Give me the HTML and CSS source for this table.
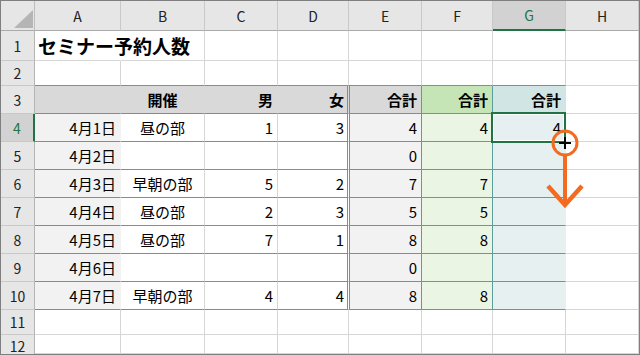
FILE: index.html
```html
<!DOCTYPE html>
<html lang="ja">
<head>
<meta charset="utf-8">
<link rel="stylesheet" href="styles.css">
</head>
<body>
<div class="sheet">
  <div class="corner"><svg width="19" height="18" viewBox="0 0 19 18"><polygon points="19,0 19,18 0,18" fill="#b5b5b5"/></svg></div>
  <div class="ch">A</div><div class="ch">B</div><div class="ch">C</div><div class="ch">D</div><div class="ch">E</div><div class="ch">F</div><div class="ch sel">G</div><div class="ch">H</div>

  <div class="rh">1</div>
  <div class="c title nr">セミナー予約人数</div><div class="c"></div><div class="c"></div><div class="c"></div><div class="c"></div><div class="c"></div><div class="c"></div><div class="c"></div>

  <div class="rh">2</div>
  <div class="c tb"></div><div class="c tb"></div><div class="c tb"></div><div class="c tb"></div><div class="c tb"></div><div class="c tb"></div><div class="c tb"></div><div class="c"></div>

  <div class="rh">3</div>
  <div class="c tb hd nr"></div>
  <div class="c tb hd nr m b">開催</div>
  <div class="c tb hd nr r b">男</div>
  <div class="c tb hd dd r b">女</div>
  <div class="c tb hd ed tr r b">合計</div>
  <div class="c tb fh tr r b">合計</div>
  <div class="c tb gh nr r b">合計</div>
  <div class="c"></div>

  <div class="rh sel">4</div>
  <div class="c tb ga nr r">4月1日</div><div class="c tb m">昼の部</div><div class="c tb r">1</div><div class="c tb dd r">3</div><div class="c tb ga ed tr r">4</div><div class="c tb fd tr r">4</div><div class="c tb gd nr r">4</div><div class="c"></div>

  <div class="rh">5</div>
  <div class="c tb ga nr r">4月2日</div><div class="c tb m"></div><div class="c tb r"></div><div class="c tb dd r"></div><div class="c tb ga ed tr r">0</div><div class="c tb fd tr r"></div><div class="c tb gd nr r"></div><div class="c"></div>

  <div class="rh">6</div>
  <div class="c tb ga nr r">4月3日</div><div class="c tb m">早朝の部</div><div class="c tb r">5</div><div class="c tb dd r">2</div><div class="c tb ga ed tr r">7</div><div class="c tb fd tr r">7</div><div class="c tb gd nr r"></div><div class="c"></div>

  <div class="rh">7</div>
  <div class="c tb ga nr r">4月4日</div><div class="c tb m">昼の部</div><div class="c tb r">2</div><div class="c tb dd r">3</div><div class="c tb ga ed tr r">5</div><div class="c tb fd tr r">5</div><div class="c tb gd nr r"></div><div class="c"></div>

  <div class="rh">8</div>
  <div class="c tb ga nr r">4月5日</div><div class="c tb m">昼の部</div><div class="c tb r">7</div><div class="c tb dd r">1</div><div class="c tb ga ed tr r">8</div><div class="c tb fd tr r">8</div><div class="c tb gd nr r"></div><div class="c"></div>

  <div class="rh">9</div>
  <div class="c tb ga nr r">4月6日</div><div class="c tb m"></div><div class="c tb r"></div><div class="c tb dd r"></div><div class="c tb ga ed tr r">0</div><div class="c tb fd tr r"></div><div class="c tb gd nr r"></div><div class="c"></div>

  <div class="rh">10</div>
  <div class="c tb ga nr r">4月7日</div><div class="c tb m">早朝の部</div><div class="c tb r">4</div><div class="c tb dd r">4</div><div class="c tb ga ed tr r">8</div><div class="c tb fd tr r">8</div><div class="c tb gd nr r"></div><div class="c"></div>

  <div class="rh">11</div>
  <div class="c"></div><div class="c"></div><div class="c"></div><div class="c"></div><div class="c"></div><div class="c"></div><div class="c"></div><div class="c"></div>

  <div class="rh last">12</div>
  <div class="c"></div><div class="c"></div><div class="c"></div><div class="c"></div><div class="c"></div><div class="c"></div><div class="c"></div><div class="c"></div>

  <div class="selection"></div>
  <svg class="cursor" width="50" height="90" viewBox="540 125 50 90">
    <circle cx="565" cy="143" r="12" fill="none" stroke="#f26b21" stroke-width="3"/>
    <line x1="565" y1="156" x2="565" y2="203" stroke="#f26b21" stroke-width="4"/>
    <polyline points="548,186 565,205 582,186" fill="none" stroke="#f26b21" stroke-width="4.5"/>
    <line x1="559" y1="143" x2="571" y2="143" stroke="#000" stroke-width="2"/>
    <line x1="565" y1="137" x2="565" y2="149" stroke="#000" stroke-width="2"/>
  </svg>
</div>
</body>
</html>
```
FILE: styles.css
```css
* { box-sizing: border-box; }
body { margin: 0; background: #fff; }

.sheet {
  position: relative;
  width: 640px;
  height: 355px;
  border: 1px solid #7f7f7f;
  overflow: hidden;
  background: #fff;
  display: grid;
  grid-template-columns: 34px 86px 84px 73px 71px 73px 71px 73px 73px;
  grid-template-rows: 30px 30px 25px 28px repeat(7, 28px) 25px 19px;
  font-family: "Noto Sans CJK JP", "Noto Sans", sans-serif;
  color: #000;
}

.corner {
  background: #e6e6e6;
  border-right: 1px solid #bdbdbd;
  border-bottom: 1px solid #ababab;
  display: flex;
  justify-content: flex-end;
  align-items: flex-end;
  padding: 0 1px 2px 0;
}
.corner svg { display: block; }

.ch {
  background: #e6e6e6;
  border-right: 1px solid #c9c9c9;
  border-bottom: 1px solid #ababab;
  display: flex;
  align-items: center;
  justify-content: center;
  font-size: 14px;
  color: #222;
}
.ch.sel {
  background: #d2d2d2;
  color: #217346;
  border-bottom: 2px solid #217346;
}

.rh {
  background: #e6e6e6;
  border-right: 1px solid #b5b5b5;
  border-bottom: 1px solid #c9c9c9;
  display: flex;
  align-items: center;
  justify-content: center;
  font-size: 14px;
  line-height: 1;
  color: #222;
}
.rh.sel {
  background: #d2d2d2;
  color: #217346;
  border-right: 2px solid #217346;
}
.rh.last {
  padding-top: 2px;
  border-bottom: none;
}

.c {
  border-right: 1px solid #d6d6d6;
  border-bottom: 1px solid #d6d6d6;
  display: flex;
  align-items: center;
  padding: 0 4px;
  font-size: 15px;
  white-space: nowrap;
}
.title {
  font-size: 19px;
  font-weight: bold;
  padding-left: 3px;
}
.r { justify-content: flex-end; }
.m { justify-content: center; }
.b { font-weight: bold; }

.tb { border-bottom-color: #5a9f9b; }
.tr { border-right-color: #5a9f9b; }
.nr { border-right-color: transparent; }

.hd { background: #d9d9d9; }
.fh { background: #c6e5b6; }
.gh { background: #d1e5e5; }
.ga { background: #f2f2f2; }
.fd { background: #ebf5e4; }
.gd { background: #e7f0f1; }

.dd {
  border-right-color: #fff;
  box-shadow: inset -1px 0 0 #5a9f9b;
}
.hd.dd { border-right-color: #d9d9d9; }
.ed { box-shadow: inset 1px 0 0 #5a9f9b; }

.selection {
  position: absolute;
  left: 490px;
  top: 111px;
  width: 75px;
  height: 31px;
  border: 2px solid #217346;
  box-shadow: inset 0 0 0 1px #fff;
}

.cursor {
  position: absolute;
  left: 539px;
  top: 124px;
}
```
